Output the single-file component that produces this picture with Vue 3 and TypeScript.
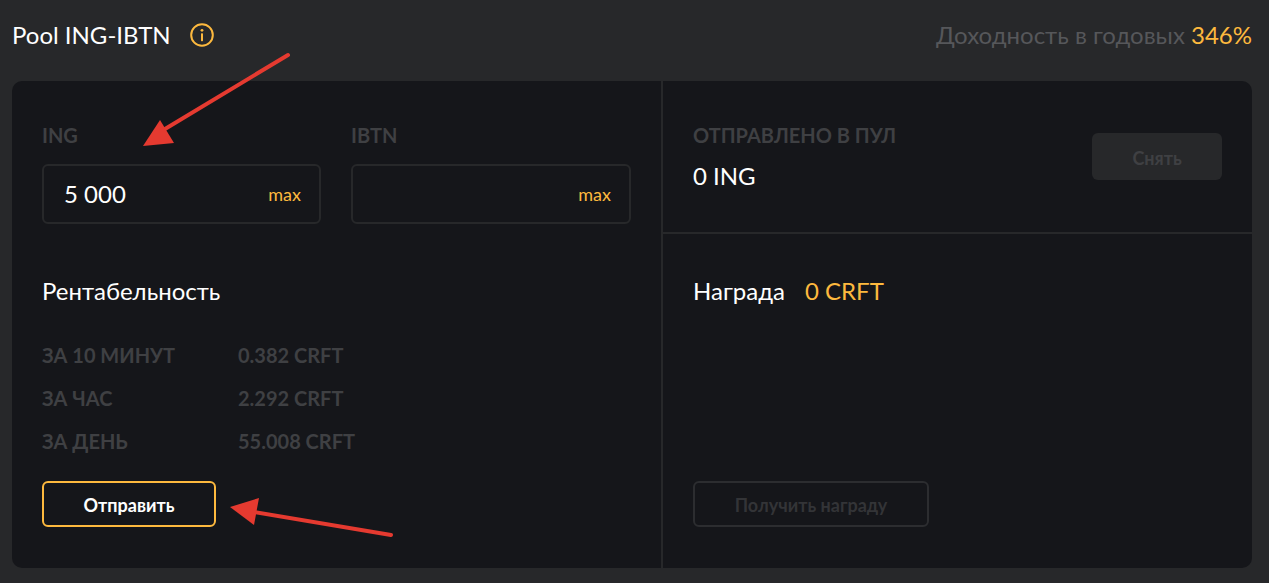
<script setup lang="ts">
interface Row {
  label: string
  value: string
}

const rows: Row[] = [
  { label: 'ЗА 10 МИНУТ', value: '0.382 CRFT' },
  { label: 'ЗА ЧАС', value: '2.292 CRFT' },
  { label: 'ЗА ДЕНЬ', value: '55.008 CRFT' }
]
</script>

<template>
  <div class="page">
    <div class="header">
      <div class="title">
        <span>Pool ING-IBTN</span>
        <svg class="info" width="24" height="24" viewBox="0 0 24 24" fill="none">
          <circle cx="12" cy="12" r="10.8" stroke="#fdb93e" stroke-width="2" />
          <circle cx="12" cy="7.3" r="1.4" fill="#fdb93e" />
          <rect x="11" y="10.2" width="2" height="8" rx="0.6" fill="#fdb93e" />
        </svg>
      </div>
      <div class="apy">Доходность в годовых <span class="gold">346%</span></div>
    </div>

    <div class="panel">
      <div class="left">
        <div class="inputs">
          <div class="field">
            <div class="label">ING</div>
            <div class="input"><span class="amount">5 000</span><span class="max">max</span></div>
          </div>
          <div class="field">
            <div class="label">IBTN</div>
            <div class="input"><span class="amount"></span><span class="max">max</span></div>
          </div>
        </div>

        <h2 class="subtitle">Рентабельность</h2>

        <div class="rows">
          <div v-for="row in rows" :key="row.label" class="row">
            <span class="row-label">{{ row.label }}</span>
            <span>{{ row.value }}</span>
          </div>
        </div>

        <button class="send">Отправить</button>
      </div>

      <div class="right">
        <div class="sent">
          <div>
            <div class="label">ОТПРАВЛЕНО В ПУЛ</div>
            <div class="sent-value">0 ING</div>
          </div>
          <button class="withdraw">Снять</button>
        </div>
        <div class="reward">
          <div class="reward-line">
            <span>Награда</span>
            <span class="gold">0 CRFT</span>
          </div>
          <button class="claim">Получить награду</button>
        </div>
      </div>
    </div>

    <!-- red annotation arrows over the page -->
    <svg class="arrows" width="1269" height="583" viewBox="0 0 1269 583" fill="none">
      <path d="M288 55 L160 132" stroke="#e53a30" stroke-width="4" stroke-linecap="round" />
      <path d="M143 146 L160 120 L174 143 Z" fill="#e53a30" />
      <path d="M391 535 L248 511" stroke="#e53a30" stroke-width="4" stroke-linecap="round" />
      <path d="M230 507 L259 498 L254 525 Z" fill="#e53a30" />
    </svg>
  </div>
</template>

<style scoped>
.page {
  position: relative;
  width: 1269px;
  height: 583px;
  overflow: hidden;
  padding: 0 17px 15px 12px;
  box-sizing: border-box;
  display: flex;
  flex-direction: column;
  background: #27282a;
  font-family: Lato, "Noto Sans", sans-serif;
  color: #fff;
}

.header {
  height: 81px;
  padding-bottom: 12px;
  box-sizing: border-box;
  display: flex;
  justify-content: space-between;
  align-items: center;
}

.title {
  display: flex;
  align-items: center;
  gap: 19px;
  font-size: 24px;
  line-height: 28px;
}

.info {
  display: block;
  width: 24px;
  height: 24px;
}

.apy {
  font-size: 24px;
  line-height: 28px;
  color: #56575a;
}

.gold {
  color: #fdb93e;
}

.panel {
  flex: 1;
  display: flex;
  background: #15161a;
  border-radius: 10px;
}

.left {
  width: 651px;
  padding: 42px 30px 0;
  box-sizing: border-box;
  border-right: 2px solid #27282a;
}

.inputs {
  display: grid;
  grid-template-columns: 279px 280px;
  gap: 30px;
}

.label {
  font-size: 20px;
  line-height: 24px;
  font-weight: 700;
  color: #3f4043;
}

.input {
  margin-top: 17px;
  height: 60px;
  box-sizing: border-box;
  border: 2px solid #27282a;
  border-radius: 6px;
  padding: 0 18px 2px 20px;
  display: flex;
  justify-content: space-between;
  align-items: center;
}

.amount {
  font-size: 24px;
}

.max {
  margin-top: 2px;
  font-size: 18px;
  color: #fdb93e;
}

.subtitle {
  margin: 53px 0 0;
  font-size: 24px;
  line-height: 28px;
  font-weight: 400;
}

.rows {
  margin-top: 38px;
  display: flex;
  flex-direction: column;
  gap: 18px;
}

.row {
  display: flex;
  font-size: 20px;
  line-height: 25px;
  font-weight: 700;
  color: #3f4043;
}

.row-label {
  width: 196px;
}

button {
  font-family: inherit;
  box-sizing: border-box;
  border-radius: 6px;
  background: transparent;
  font-weight: 700;
  font-size: 18px;
  padding: 2px 0 0;
}

.send {
  display: block;
  margin-top: 27px;
  width: 174px;
  height: 46px;
  border: 2px solid #fdb93e;
  color: #fff;
}

.right {
  flex: 1;
  display: flex;
  flex-direction: column;
}

.sent {
  height: 153px;
  padding: 42px 30px 0;
  box-sizing: border-box;
  border-bottom: 2px solid #27282a;
  display: flex;
  justify-content: space-between;
  align-items: flex-start;
}

.sent-value {
  margin-top: 13px;
  font-size: 24px;
  line-height: 32px;
}

.withdraw {
  margin-top: 10px;
  width: 130px;
  height: 47px;
  border: none;
  background: #27282a;
  color: #3f4043;
}

.reward {
  flex: 1;
  padding: 43px 30px 41px;
  display: flex;
  flex-direction: column;
  justify-content: space-between;
  align-items: flex-start;
}

.reward-line {
  display: flex;
  gap: 20px;
  font-size: 24px;
  line-height: 28px;
}

.claim {
  width: 236px;
  height: 46px;
  border: 2px solid #2c2d30;
  color: #333437;
}

.arrows {
  position: absolute;
  left: 0;
  top: 0;
  pointer-events: none;
}
</style>
